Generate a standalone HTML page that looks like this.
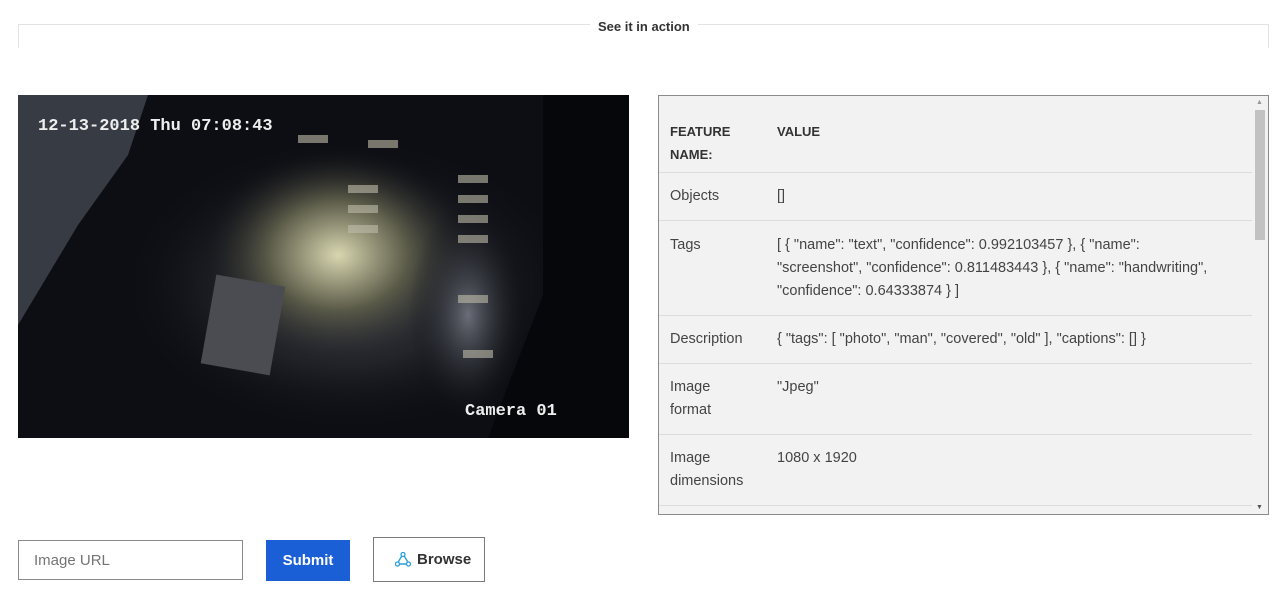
<!DOCTYPE html>
<html><head><meta charset="utf-8"><style>
*{margin:0;padding:0;box-sizing:border-box}
body{width:1280px;height:595px;background:#fff;font-family:"Liberation Sans",sans-serif;color:#333;position:relative;overflow:hidden}
.fs{position:absolute;left:18px;top:24px;width:1251px;height:24px;border:1px solid #e3e3e3;border-bottom:none}
.leg{position:absolute;left:590px;top:19px;background:#fff;padding:0 8px;font-size:13px;font-weight:bold;color:#333}
.img{position:absolute;left:18px;top:95px;width:611px;height:343px;background:#0c0d12;overflow:hidden}
.panel{position:absolute;left:658px;top:95px;width:611px;height:420px;border:1px solid #8a8a8a;background:#f2f2f2;overflow:hidden}
.row{position:absolute;left:0;width:594px;border-bottom:1px solid #dcdcdc;font-size:14.5px;line-height:23px;color:#444}
.row .k{position:absolute;left:11px;top:0;width:80px}
.row .v{position:absolute;left:118px;top:0;width:445px}
.sb{position:absolute;right:0;top:0;width:16px;height:100%;background:#f2f2f2}
.th{position:absolute;right:3px;top:14px;width:10px;height:130px;background:#c2c2c2}
input{position:absolute;left:18px;top:540px;width:225px;height:40px;border:1px solid #8a8a8a;font-size:15px;padding-left:15px;color:#777;font-family:"Liberation Sans",sans-serif}
.sub{position:absolute;left:266px;top:540px;width:84px;height:41px;background:#1a5fd6;color:#fff;font-weight:bold;font-size:15px;text-align:center;line-height:41px}
.br{position:absolute;left:373px;top:537px;width:112px;height:45px;border:1px solid #7a7a7a;font-weight:bold;font-size:15px;line-height:43px;color:#333;padding-left:43px}
</style></head><body>
<div class="fs"></div><div class="leg">See it in action</div>
<div class="img">
<svg width="611" height="343">
<defs><radialGradient id="g1" cx="0.5" cy="0.5" r="0.5"><stop offset="0" stop-color="#d8d6b0"/><stop offset="0.5" stop-color="#5a5a48"/><stop offset="1" stop-color="#0c0d12" stop-opacity="0"/></radialGradient>
<radialGradient id="g2" cx="0.5" cy="0.5" r="0.5"><stop offset="0" stop-color="#6a6e78"/><stop offset="1" stop-color="#0c0d12" stop-opacity="0"/></radialGradient></defs>
<rect width="611" height="343" fill="#0d0e13"/>
<ellipse cx="330" cy="190" rx="230" ry="150" fill="url(#g2)"/>
<ellipse cx="320" cy="160" rx="140" ry="110" fill="url(#g1)"/>
<ellipse cx="450" cy="220" rx="60" ry="110" fill="url(#g2)"/>
<polygon points="0,0 130,0 110,60 60,130 0,230" fill="#4a4e5a" opacity="0.7"/>
<polygon points="525,0 611,0 611,343 470,343 525,200" fill="#06070a"/>
<g fill="#bfbcaa" opacity="0.6">
<rect x="330" y="90" width="30" height="8"/><rect x="330" y="110" width="30" height="8"/><rect x="330" y="130" width="30" height="8"/>
<rect x="440" y="80" width="30" height="8"/><rect x="440" y="100" width="30" height="8"/><rect x="440" y="120" width="30" height="8"/><rect x="440" y="140" width="30" height="8"/><rect x="440" y="200" width="30" height="8"/><rect x="445" y="255" width="30" height="8"/>
<rect x="280" y="40" width="30" height="8"/><rect x="350" y="45" width="30" height="8"/>
</g>
<rect x="190" y="185" width="70" height="90" fill="#4a4c52" transform="rotate(10 225 230)"/>
<text x="20" y="35" font-family="Liberation Mono,monospace" font-size="17" fill="#eee" font-weight="bold">12-13-2018 Thu 07:08:43</text>
<text x="447" y="320" font-family="Liberation Mono,monospace" font-size="17" fill="#eee" font-weight="bold">Camera 01</text>
</svg></div>
<div class="panel">
<div class="row" style="top:14px;height:63px;font-weight:bold;font-size:13px;color:#333"><div class="k" style="top:10px;width:70px">FEATURE NAME:</div><div class="v" style="top:10px">VALUE</div></div>
<div class="row" style="top:77px;height:48px"><div class="k" style="top:12px">Objects</div><div class="v" style="top:12px">[]</div></div>
<div class="row" style="top:125px;height:95px"><div class="k" style="top:13px">Tags</div><div class="v" style="top:13px">[ { "name": "text", "confidence": 0.992103457 }, { "name": "screenshot", "confidence": 0.811483443 }, { "name": "handwriting", "confidence": 0.64333874 } ]</div></div>
<div class="row" style="top:220px;height:48px"><div class="k" style="top:12px">Description</div><div class="v" style="top:12px">{ "tags": [ "photo", "man", "covered", "old" ], "captions": [] }</div></div>
<div class="row" style="top:268px;height:71px"><div class="k" style="top:12px;width:60px">Image format</div><div class="v" style="top:12px">"Jpeg"</div></div>
<div class="row" style="top:339px;height:71px"><div class="k" style="top:12px">Image dimensions</div><div class="v" style="top:12px">1080 x 1920</div></div>
<div class="sb"><div style="position:absolute;top:3px;left:4px;font-size:7px;color:#999">▲</div><div class="th"></div><div style="position:absolute;bottom:3px;left:4px;font-size:7px;color:#555">▼</div></div>
</div>
<input placeholder="Image URL">
<div class="sub">Submit</div>
<div class="br"><svg style="position:absolute;left:20px;top:14px" width="18" height="17" viewBox="0 0 18 17"><path d="M9 2 L15 12 L3 12 Z" fill="none" stroke="#2aa0d8" stroke-width="1.4" stroke-linejoin="round"/><circle cx="9" cy="2.5" r="2" fill="#fff" stroke="#2aa0d8" stroke-width="1.3"/><circle cx="3.5" cy="12" r="2" fill="#fff" stroke="#2aa0d8" stroke-width="1.3"/><circle cx="14.5" cy="12" r="2" fill="#fff" stroke="#2aa0d8" stroke-width="1.3"/></svg>Browse</div>
</body></html>
